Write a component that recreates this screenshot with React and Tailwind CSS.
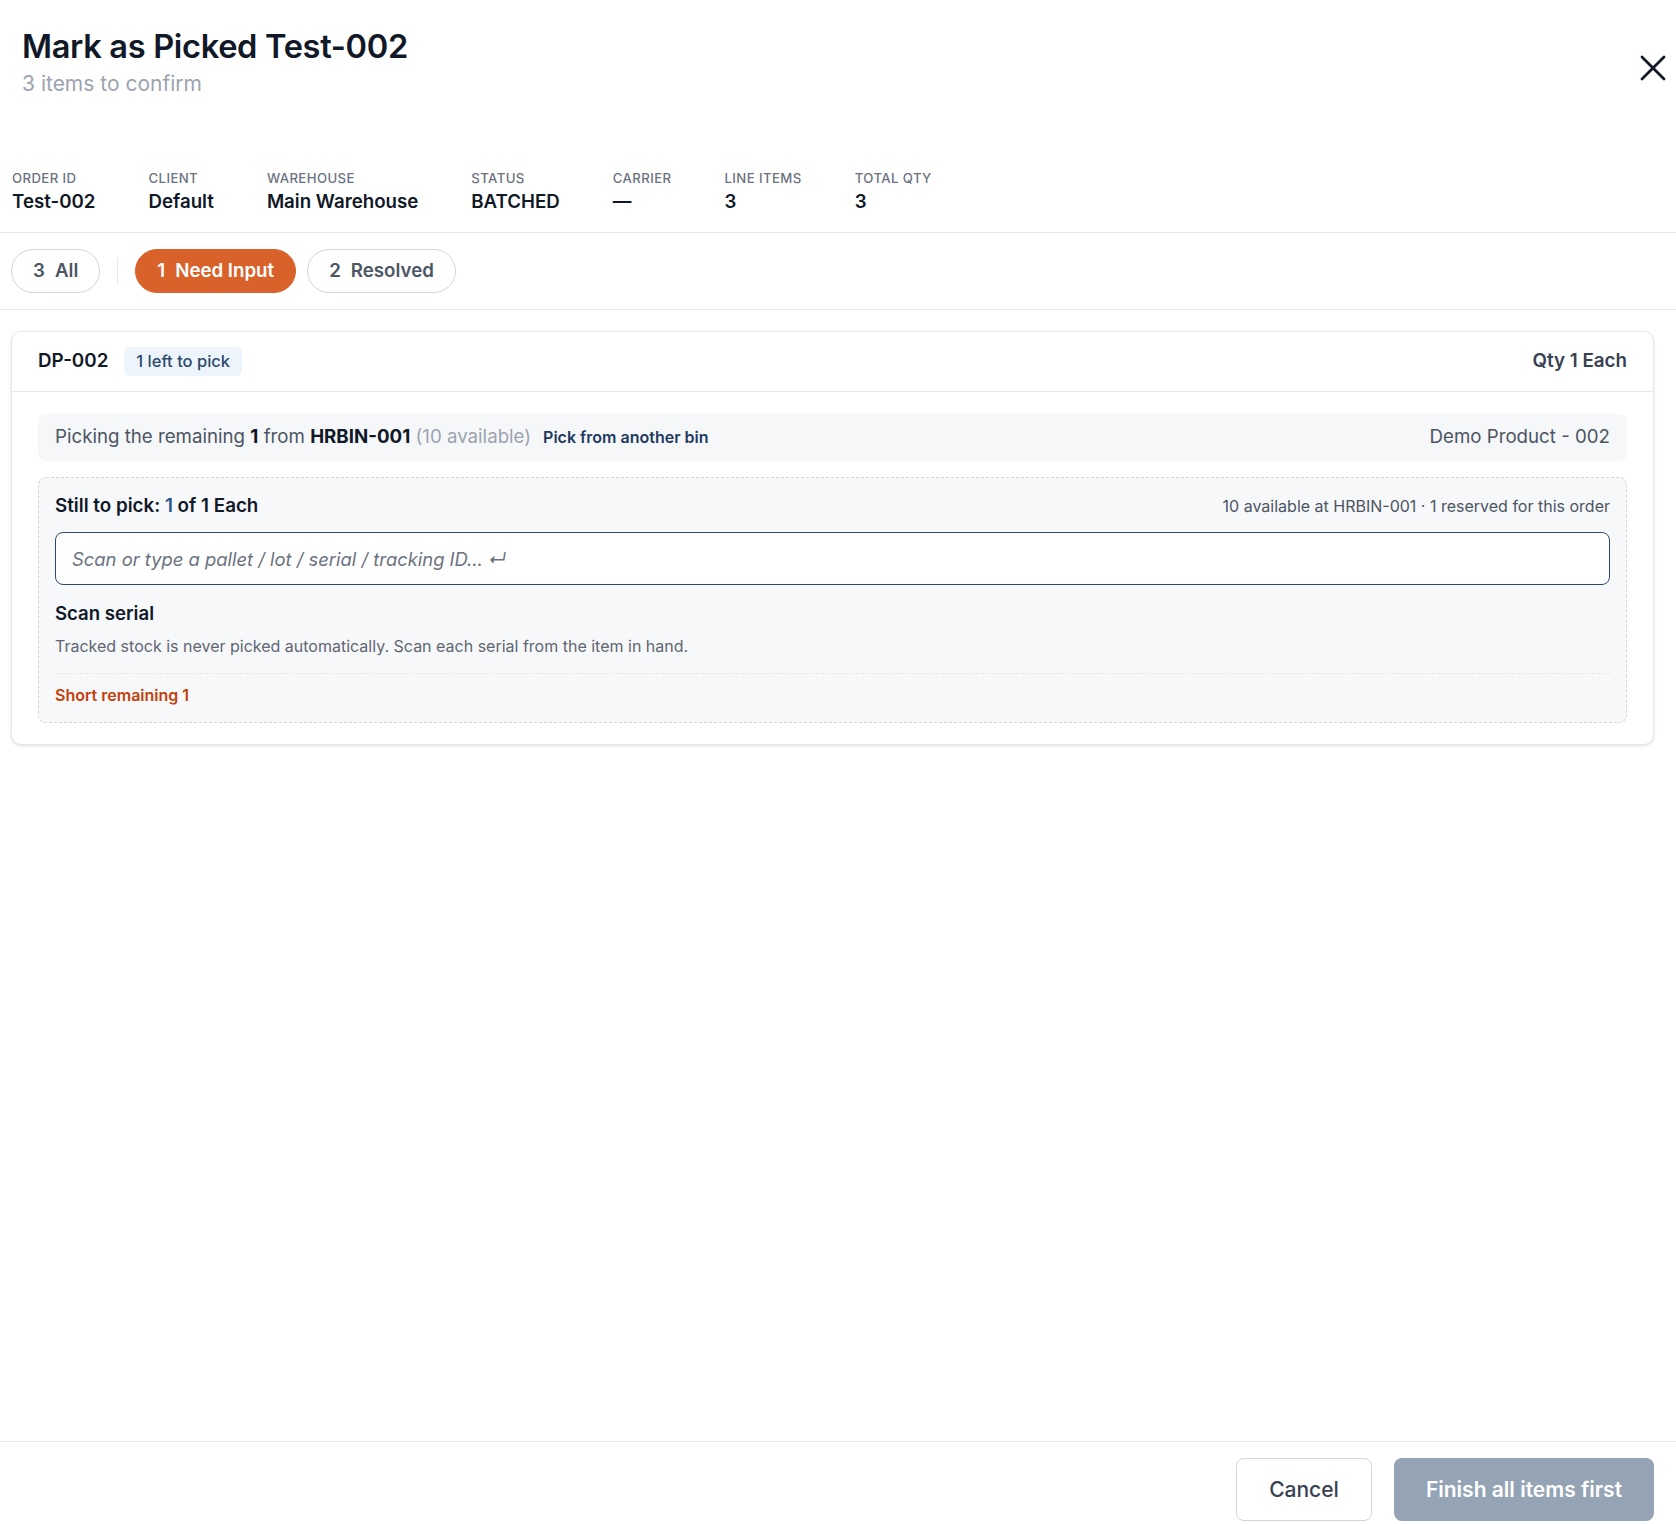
import { useState } from "react";

const meta = [
  { label: "Order ID", value: "Test-002" },
  { label: "Client", value: "Default" },
  { label: "Warehouse", value: "Main Warehouse" },
  { label: "Status", value: "BATCHED" },
  { label: "Carrier", value: "—" },
  { label: "Line Items", value: "3" },
  { label: "Total Qty", value: "3" },
];

const tabs = [
  { id: "all", count: 3, label: "All" },
  { id: "need", count: 1, label: "Need Input" },
  { id: "resolved", count: 2, label: "Resolved" },
];

function CloseIcon() {
  return (
    <svg width="26" height="26" viewBox="0 0 26 26" fill="none">
      <path d="M2 2L24 24M24 2L2 24" stroke="#111827" strokeWidth="2.8" strokeLinecap="round" />
    </svg>
  );
}

function TabPill({ tab, active, onClick }) {
  return (
    <button
      onClick={onClick}
      className={`flex h-[44px] items-center gap-[10px] rounded-full border px-[21px] text-[18.7px] font-semibold ${
        active
          ? "border-[#d9622b] bg-[#d9622b] text-white"
          : "border-gray-300 bg-white text-[#4b5563]"
      }`}
    >
      <span>{tab.count}</span>
      <span>{tab.label}</span>
    </button>
  );
}

export default function App() {
  const [activeTab, setActiveTab] = useState("need");
  const [scan, setScan] = useState("");

  return (
    <div className="flex h-screen flex-col bg-white font-['Inter','Liberation_Sans',sans-serif] text-[#111827]">
      <header className="flex items-start justify-between pl-[22px] pr-[10px] pt-[26px]">
        <div>
          <h1 className="text-[32.6px] font-semibold leading-[40px] tracking-[-0.01em] text-[#111827]">
            Mark as Picked Test-002
          </h1>
          <p className="mt-1 text-[21px] leading-[28px] text-[#9ca3af]">3 items to confirm</p>
        </div>
        <button className="mt-[29px]">
          <CloseIcon />
        </button>
      </header>

      <section className="flex gap-[53px] border-b border-gray-200 px-[12px] pb-[18px] pt-[72px]">
        {meta.map((item) => (
          <div key={item.label}>
            <p className="text-[13.2px] font-medium uppercase leading-[16px] tracking-[0.03em] text-[#6b7280]">
              {item.label}
            </p>
            <p className="mt-1 text-[18.7px] font-semibold leading-[24px] text-[#111827]">{item.value}</p>
          </div>
        ))}
      </section>

      <section className="flex items-center gap-[11px] border-b border-gray-200 px-[11px] py-[16px]">
        <TabPill tab={tabs[0]} active={activeTab === "all"} onClick={() => setActiveTab("all")} />
        <div className="mx-[6px] h-[26px] w-px bg-gray-200" />
        {tabs.slice(1).map((tab) => (
          <TabPill key={tab.id} tab={tab} active={activeTab === tab.id} onClick={() => setActiveTab(tab.id)} />
        ))}
      </section>

      <main className="flex-1 overflow-auto pl-[11px] pr-[22px] pt-[21px]">
        <div className="rounded-[10px] border border-gray-200 bg-white shadow-sm">
          <div className="flex h-[60px] items-center justify-between border-b border-gray-200 px-[26px]">
            <div className="flex items-center gap-4">
              <span className="text-[18.8px] font-semibold">DP-002</span>
              <span className="rounded-md bg-[#eef4fc] px-3 py-[2px] text-[16.5px] font-medium text-[#2c4a6b]">
                1 left to pick
              </span>
            </div>
            <span className="text-[18.8px] font-semibold text-[#374151]">Qty 1 Each</span>
          </div>

          <div className="px-[26px] pb-[21px] pt-[22px]">
            <div className="flex h-[47px] items-center justify-between rounded-lg bg-[#f6f7f9] px-[17px] text-[18.7px] text-[#4b5563]">
              <div className="flex items-center">
                <span>
                  Picking the remaining <b className="font-bold text-[#111827]">1</b> from{" "}
                  <b className="font-bold text-[#111827]">HRBIN-001</b>{" "}
                  <span className="text-[#9ca3af]">(10 available)</span>
                </span>
                <button className="ml-3 text-[16px] font-semibold text-[#1e3a5f]">Pick from another bin</button>
              </div>
              <span>Demo Product - 002</span>
            </div>

            <div className="mt-4 rounded-lg border border-dashed border-gray-300 bg-[#f7f8fa] px-4 pb-[15px] pt-4">
              <div className="flex items-center justify-between">
                <p className="text-[18.8px] font-semibold leading-[24px]">
                  Still to pick: <span className="text-[#285489]">1</span> of 1 Each
                </p>
                <p className="text-[16px] text-[#4b5563]">10 available at HRBIN-001 · 1 reserved for this order</p>
              </div>

              <input
                value={scan}
                onChange={(e) => setScan(e.target.value)}
                placeholder="Scan or type a pallet / lot / serial / tracking ID... ↵"
                className="mt-[14px] h-[53px] w-full rounded-lg border-[1.5px] border-[#2b4a6f] bg-white px-4 text-[18.4px] outline-none placeholder:italic placeholder:text-[#6b7280]"
              />

              <p className="mt-4 text-[18.6px] font-semibold leading-[24px]">Scan serial</p>
              <p className="mt-[9px] text-[16px] leading-[24px] text-[#5f6673]">
                Tracked stock is never picked automatically. Scan each serial from the item in hand.
              </p>
              <div className="mt-[15px] border-t border-dashed border-gray-200" />
              <p className="mt-[9px] text-[16px] font-semibold leading-[24px] text-[#c2410c]">Short remaining 1</p>
            </div>
          </div>
        </div>
      </main>

      <footer className="flex h-[83px] shrink-0 justify-end gap-[22px] border-t border-gray-200 px-[22px] pt-[16px]">
        <button className="h-[63px] w-[136px] rounded-lg border border-gray-300 bg-white text-[21px] font-medium text-[#374151]">
          Cancel
        </button>
        <button disabled className="h-[63px] w-[260px] rounded-lg bg-[#95a4b5] text-[21px] font-semibold text-white">
          Finish all items first
        </button>
      </footer>
    </div>
  );
}
